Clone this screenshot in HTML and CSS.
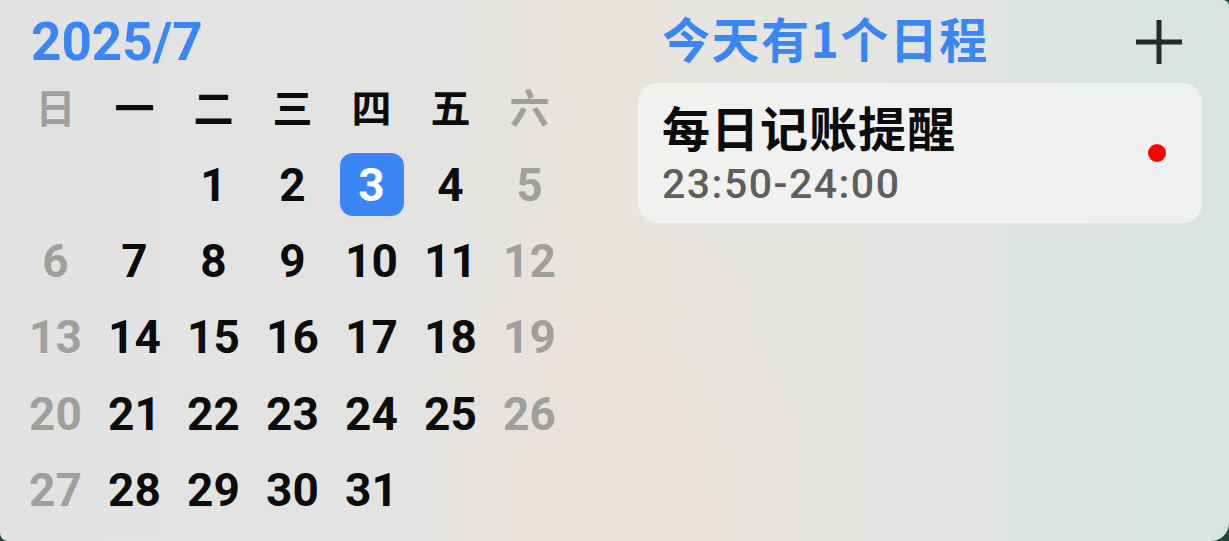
FILE: index.html
```html
<!DOCTYPE html>
<html lang="zh-CN">
  <head>
    <meta charset="UTF-8" />
    <meta name="viewport" content="width=device-width, initial-scale=1.0" />
    <title>日历</title>
    <link rel="stylesheet" href="styles.css">
  </head>

  <body>
    <div class="widget">
      <div class="month">
        <div class="month-title">2025/7</div>
        <div class="days">
          <span class="wk off">日</span>
          <span class="wk">一</span>
          <span class="wk">二</span>
          <span class="wk">三</span>
          <span class="wk">四</span>
          <span class="wk">五</span>
          <span class="wk off">六</span>

          <span class="day"></span>
          <span class="day"></span>
          <span class="day">1</span>
          <span class="day">2</span>
          <span class="day today">3</span>
          <span class="day">4</span>
          <span class="day off">5</span>

          <span class="day off">6</span>
          <span class="day">7</span>
          <span class="day">8</span>
          <span class="day">9</span>
          <span class="day">10</span>
          <span class="day">11</span>
          <span class="day off">12</span>

          <span class="day off">13</span>
          <span class="day">14</span>
          <span class="day">15</span>
          <span class="day">16</span>
          <span class="day">17</span>
          <span class="day">18</span>
          <span class="day off">19</span>

          <span class="day off">20</span>
          <span class="day">21</span>
          <span class="day">22</span>
          <span class="day">23</span>
          <span class="day">24</span>
          <span class="day">25</span>
          <span class="day off">26</span>

          <span class="day off">27</span>
          <span class="day">28</span>
          <span class="day">29</span>
          <span class="day">30</span>
          <span class="day">31</span>
        </div>
      </div>

      <div class="agenda">
        <div class="agenda-head">
          <span class="agenda-title">今天有1个日程</span>
          <svg class="add" width="46" height="44" viewBox="0 0 46 44">
            <path d="M23 0 V44 M0 22 H46" stroke="#2a2a2a" stroke-width="5" fill="none" />
          </svg>
        </div>
        <div class="event">
          <div class="event-text">
            <div class="event-name">每日记账提醒</div>
            <div class="event-time">23:50-24:00</div>
          </div>
          <span class="dot"></span>
        </div>
      </div>
    </div>
  </body>
</html>
```

FILE: styles.css
```css
html,
body {
  margin: 0;
  background-color: #21473a;
}

.widget {
  display: flex;
  width: 1229px;
  height: 541px;
  border-radius: 0 6px 18px 8px;
  overflow: hidden;
  font-family: Roboto, "Noto Sans CJK SC", sans-serif;
  background:
    radial-gradient(ellipse 220px 340px at 620px 540px, rgba(236, 224, 216, 0.9), rgba(236, 224, 216, 0)),
    linear-gradient(90deg, #e2e2e2 0%, #e3e3e2 35%, #e8e4dc 48%, #e6e4e1 60%, #e2e4e1 78%, #d9e4df 100%);
}

.month {
  padding: 15px 0 0 16px;
  width: 560px;
}

.month-title {
  height: 55px;
  line-height: 55px;
  padding-left: 15px;
  font-size: 53px;
  font-weight: 700;
  color: #3a86f4;
}

.days {
  display: grid;
  grid-template-columns: repeat(7, 79px);
  grid-auto-rows: 76.4px;
}

.wk,
.day {
  display: flex;
  align-items: center;
  justify-content: center;
  color: #0c0c0c;
}

.wk {
  font-family: "Noto Sans CJK SC", sans-serif;
  font-size: 40px;
  font-weight: 700;
  padding-bottom: 4px;
}

.day {
  font-size: 46px;
  font-weight: 700;
}

.off {
  color: #9f9f9c;
}

.today {
  justify-self: center;
  align-self: center;
  width: 64px;
  height: 63px;
  border-radius: 13px;
  background-color: #3b86f6;
  color: #fff;
}

.agenda {
  margin-left: auto;
  margin-right: 27px;
  width: 564px;
}

.agenda-head {
  display: flex;
  align-items: center;
  justify-content: space-between;
  height: 83px;
  padding: 0 20px 0 24px;
}

.agenda-title {
  margin-bottom: 10px;
  font-family: "Noto Sans CJK SC", sans-serif;
  font-size: 48px;
  font-weight: 700;
  color: #3a86f4;
  letter-spacing: 1.5px;
}

.add {
  display: block;
}

.event {
  display: flex;
  align-items: center;
  justify-content: space-between;
  height: 140px;
  padding: 0 36px 0 24px;
  border-radius: 20px;
  background-color: rgba(244, 245, 244, 0.75);
}

.event-name {
  margin-bottom: 11px;
  font-family: "Noto Sans CJK SC", sans-serif;
  font-size: 48px;
  font-weight: 700;
  line-height: 50px;
  color: #0c0c0c;
  letter-spacing: 1px;
}

.event-time {
  font-size: 41px;
  font-weight: 500;
  line-height: 44px;
  color: #5e5e5e;
  letter-spacing: 1.5px;
}

.dot {
  width: 18px;
  height: 18px;
  border-radius: 50%;
  background-color: #f00;
}
```
